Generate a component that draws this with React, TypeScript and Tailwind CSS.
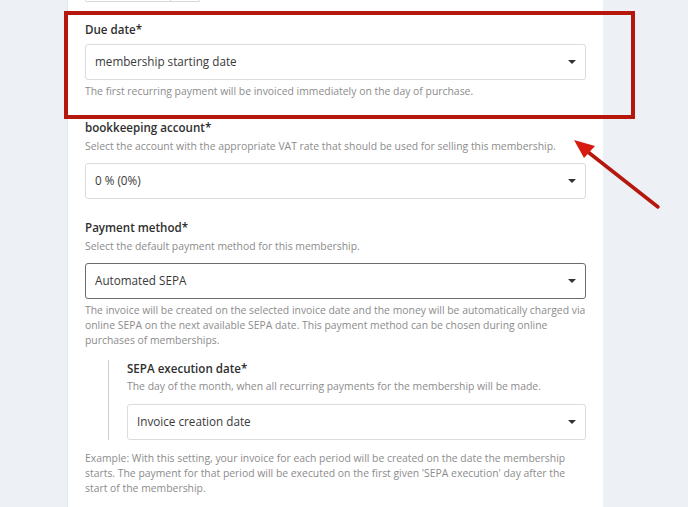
import React from 'react';

const Caret = () => (
  <svg width="8" height="4" viewBox="0 0 8 4" className="shrink-0">
    <path d="M0 0 H8 L4 4 Z" fill="#333" />
  </svg>
);

const Select: React.FC<{ value: string; dark?: boolean }> = ({ value, dark }) => (
  <div
    className={`flex items-center justify-between h-[36px] pl-[9px] pr-[9px] rounded-[3px] bg-white border ${
      dark ? 'border-[#6b6b6b]' : 'border-[#dcdcdc]'
    }`}
  >
    <span className="text-[11.7px] text-[#3a3a3a]">{value}</span>
    <Caret />
  </div>
);

const Label: React.FC<{ children: React.ReactNode }> = ({ children }) => (
  <div className="text-[11.6px] leading-[18px] font-semibold text-[#2f2f2f]">{children}</div>
);

const Help: React.FC<{ children: React.ReactNode; className?: string }> = ({ children, className }) => (
  <p className={`text-[10.4px] leading-[15px] text-[#8c8c8c] ${className ?? ''}`}>{children}</p>
);

export default function App() {
  return (
    <div
      className="relative h-[507px] w-[688px] overflow-hidden bg-[#edf0f4]"
      style={{ fontFamily: '"Open Sans", "Liberation Sans", sans-serif' }}
    >
      <div className="ml-[67px] w-[536px] h-full bg-white border-l border-[#e2e5ea] pl-[17px] pr-[17px]">
        {/* bottom edge of the control above */}
        <div className="flex w-[115px] h-[2px] border-x border-b border-[#d8d8d8] rounded-b-[3px]">
          <div className="w-[85px] border-r border-[#d8d8d8]" />
        </div>

        {/* Due date */}
        <div className="mt-[19px]">
          <Label>Due date*</Label>
          <div className="mt-[5px]">
            <Select value="membership starting date" />
          </div>
          <Help className="mt-[4px]">The first recurring payment will be invoiced immediately on the day of purchase.</Help>
        </div>

        {/* bookkeeping account */}
        <div className="mt-[20px]">
          <Label>bookkeeping account*</Label>
          <Help className="mt-[2px]">
            Select the account with the appropriate VAT rate that should be used for selling this membership.
          </Help>
          <div className="mt-[9px]">
            <Select value="0 % (0%)" />
          </div>
        </div>

        {/* Payment method */}
        <div className="mt-[20px]">
          <Label>Payment method*</Label>
          <Help className="mt-[2px]">Select the default payment method for this membership.</Help>
          <div className="mt-[9px]">
            <Select value="Automated SEPA" dark />
          </div>
          <Help className="mt-[4px]">
            The invoice will be created on the selected invoice date and the money will be automatically charged via
            online SEPA on the next available SEPA date. This payment method can be chosen during online purchases of
            memberships.
          </Help>

          {/* SEPA execution date */}
          <div className="mt-[12px] ml-[23px] border-l border-[#cfcfcf] pl-[18px]">
            <Label>SEPA execution date*</Label>
            <Help className="mt-[1px]">The day of the month, when all recurring payments for the membership will be made.</Help>
            <div className="mt-[10px]">
              <Select value="Invoice creation date" />
            </div>
          </div>

          <Help className="mt-[11px]">
            Example: With this setting, your invoice for each period will be created on the date the membership
            starts. The payment for that period will be executed on the first given 'SEPA execution' day after the
            start of the membership.
          </Help>
        </div>
      </div>

      {/* annotation: highlight box */}
      <div className="absolute left-[64px] top-[11px] w-[571px] h-[108px] border-[4px] border-[#b5170c]" />

      {/* annotation: arrow */}
      <svg className="absolute left-0 top-0" width="688" height="507" viewBox="0 0 688 507">
        <line x1="658" y1="207" x2="588" y2="152" stroke="#b5170c" strokeWidth="3.5" strokeLinecap="round" />
        <polygon points="574,140 595,146 584,158" fill="#d81b10" />
      </svg>
    </div>
  );
}
